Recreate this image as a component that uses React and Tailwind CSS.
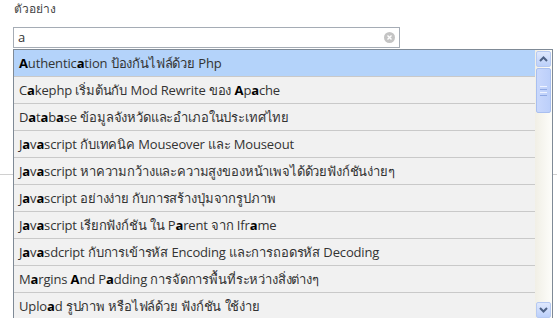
import React from "react";

const items = [
  "Authentication ป้องกันไฟล์ด้วย Php",
  "Cakephp เริ่มต้นกับ Mod Rewrite ของ Apache",
  "Database ข้อมูลจังหวัดและอำเภอในประเทศไทย",
  "Javascript กับเทคนิค Mouseover และ Mouseout",
  "Javascript หาความกว้างและความสูงของหน้าเพจได้ด้วยฟังก์ชันง่ายๆ",
  "Javascript อย่างง่าย กับการสร้างปุ่มจากรูปภาพ",
  "Javascript เรียกฟังก์ชัน ใน Parent จาก Iframe",
  "Javasdcript กับการเข้ารหัส Encoding และการถอดรหัส Decoding",
  "Margins And Padding การจัดการพื้นที่ระหว่างสิ่งต่างๆ",
  "Upload รูปภาพ หรือไฟล์ด้วย ฟังก์ชัน ใช้ง่าย",
];

function Highlight({ text }) {
  const parts = text.split(/([aA])/);
  return (
    <span className="whitespace-pre">
      {parts.map((p, i) =>
        p === "a" || p === "A" ? (
          <b key={i} className="font-bold text-black">{p}</b>
        ) : (
          p
        )
      )}
    </span>
  );
}

function Scrollbar() {
  return (
    <div className="flex h-full w-[17px] flex-col bg-gradient-to-r from-[#f1efe6] to-[#fdfdfa] pt-[1px]">
      <div className="mx-[1px] flex h-[16px] items-center justify-center rounded-[2px] border border-[#b6c9f2] bg-gradient-to-b from-[#dfe8fd] to-[#bcd0fa]">
        <svg width="9" height="6" viewBox="0 0 9 6">
          <path d="M1 5 L4.5 1.5 L8 5" stroke="#4d6185" strokeWidth="2" fill="none" />
        </svg>
      </div>
      <div className="mx-[1px] mt-[1px] flex h-[45px] flex-col items-center justify-center gap-[2px] rounded-[2px] border border-[#a9bff0] bg-gradient-to-r from-[#c9d8fc] to-[#bccffa]">
        <div className="h-[1px] w-[7px] bg-[#eef3ff]" />
        <div className="h-[1px] w-[7px] bg-[#8fa9e4]" />
        <div className="h-[1px] w-[7px] bg-[#eef3ff]" />
        <div className="h-[1px] w-[7px] bg-[#8fa9e4]" />
      </div>
      <div className="flex-1" />
      <div className="mx-[1px] mb-[1px] flex h-[16px] items-center justify-center rounded-[2px] border border-[#b6c9f2] bg-gradient-to-b from-[#dfe8fd] to-[#bcd0fa]">
        <svg width="9" height="6" viewBox="0 0 9 6">
          <path d="M1 1 L4.5 4.5 L8 1" stroke="#4d6185" strokeWidth="2" fill="none" />
        </svg>
      </div>
    </div>
  );
}

export default function App() {
  const font = { fontFamily: '"Open Sans", "Noto Sans", sans-serif' };
  return (
    <div
      className="relative h-[318px] w-[557px] overflow-hidden bg-white text-[#333]"
      style={font}
    >
      <div className="pl-[14px] pt-[1px] text-[12px] leading-[16px] text-[#444]">ตัวอย่าง</div>
      <div className="ml-[13px] mt-[10px] flex h-[21px] w-[387px] items-center border border-[#a5acb5] pl-[4px] pr-[4px] text-[13px]">
        <span className="flex-1">a</span>
        <span className="flex h-[11px] w-[11px] items-center justify-center rounded-full bg-[#c4c4c4]">
          <svg width="5" height="5" viewBox="0 0 5 5">
            <path d="M0.5 0.5 L4.5 4.5 M4.5 0.5 L0.5 4.5" stroke="white" strokeWidth="1.4" />
          </svg>
        </span>
      </div>
      <div className="mt-[126px] h-[1px] w-full bg-[#d0d0d0]" />

      <div className="absolute left-[13px] top-[49px] flex h-[271px] w-[540px] border border-[#7f8a96] bg-[#f1f1f1]">
        <div className="flex-1">
          {items.map((t, i) => (
            <div
              key={i}
              className={
                "h-[27px] border-b border-[#c9c9c9] pl-[5px] text-[13px] leading-[26px] tracking-[-0.15px] " +
                (i === 0 ? "bg-[#b4d3fa]" : "bg-[#f1f1f1]")
              }
            >
              <Highlight text={t} />
            </div>
          ))}
        </div>
        <Scrollbar />
      </div>
    </div>
  );
}
